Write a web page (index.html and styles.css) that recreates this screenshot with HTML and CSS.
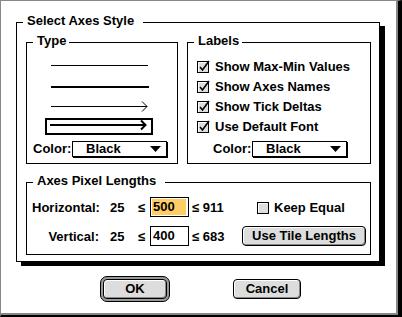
FILE: index.html
```html
<!DOCTYPE html>
<html lang="en">
<head>
    <meta charset="UTF-8">
    <title>Select Axes Style</title>
    <link rel="stylesheet" href="styles.css">
</head>
<body>
    <div class="dialog">
        <div class="group group-main">
            <span class="group-title wide">Select Axes Style</span>
            <div class="top-row">
                <div class="group group-type">
                    <span class="group-title">Type</span>
                    <div class="sample">
                        <svg width="108" height="20" shape-rendering="crispEdges"><rect x="6" y="10" width="97" height="1"/></svg>
                    </div>
                    <div class="sample">
                        <svg width="108" height="20" shape-rendering="crispEdges"><rect x="6" y="11" width="98" height="2"/></svg>
                    </div>
                    <div class="sample">
                        <svg width="108" height="20"><rect x="6" y="11" width="96" height="1" shape-rendering="crispEdges"/><polyline points="97,6.5 102,11.5 97,16.5" fill="none" stroke="#000"/></svg>
                    </div>
                    <div class="sample sample-boxed">
                        <svg width="108" height="17"><rect x="1" y="1" width="106" height="15" fill="none" stroke="#000" stroke-width="2" shape-rendering="crispEdges"/><rect x="5" y="6" width="94" height="2" shape-rendering="crispEdges"/><polyline points="96,2.5 100.5,7 96,11.5" fill="none" stroke="#000" stroke-width="2"/></svg>
                    </div>
                    <div class="color-row">
                        <span class="field-label">Color:</span>
                        <div class="popup">
                            <span>Black</span>
                            <svg class="popup-arrow" width="11" height="6"><polygon points="0,0 11,0 5.5,6"/></svg>
                        </div>
                    </div>
                </div>
                <div class="group group-labels">
                    <span class="group-title">Labels</span>
                    <div class="check-row">
                        <svg class="checkbox" width="13" height="13" viewBox="0 0 13 13"><rect x="0.5" y="1.5" width="11" height="11" fill="#ddd" stroke="#000"/><path d="M1.5 11.5V2.5H10.5" fill="none" stroke="#fff"/><path d="M3 7l2.5 3L12 1" fill="none" stroke="#000" stroke-width="1.6"/></svg>
                        <span>Show Max-Min Values</span>
                    </div>
                    <div class="check-row">
                        <svg class="checkbox" width="13" height="13" viewBox="0 0 13 13"><rect x="0.5" y="1.5" width="11" height="11" fill="#ddd" stroke="#000"/><path d="M1.5 11.5V2.5H10.5" fill="none" stroke="#fff"/><path d="M3 7l2.5 3L12 1" fill="none" stroke="#000" stroke-width="1.6"/></svg>
                        <span>Show Axes Names</span>
                    </div>
                    <div class="check-row">
                        <svg class="checkbox" width="13" height="13" viewBox="0 0 13 13"><rect x="0.5" y="1.5" width="11" height="11" fill="#ddd" stroke="#000"/><path d="M1.5 11.5V2.5H10.5" fill="none" stroke="#fff"/><path d="M3 7l2.5 3L12 1" fill="none" stroke="#000" stroke-width="1.6"/></svg>
                        <span>Show Tick Deltas</span>
                    </div>
                    <div class="check-row">
                        <svg class="checkbox" width="13" height="13" viewBox="0 0 13 13"><rect x="0.5" y="1.5" width="11" height="11" fill="#ddd" stroke="#000"/><path d="M1.5 11.5V2.5H10.5" fill="none" stroke="#fff"/><path d="M3 7l2.5 3L12 1" fill="none" stroke="#000" stroke-width="1.6"/></svg>
                        <span>Use Default Font</span>
                    </div>
                    <div class="color-row">
                        <span class="field-label">Color:</span>
                        <div class="popup">
                            <span>Black</span>
                            <svg class="popup-arrow" width="11" height="6"><polygon points="0,0 11,0 5.5,6"/></svg>
                        </div>
                    </div>
                </div>
            </div>
            <div class="group group-pixels">
                <span class="group-title wide">Axes Pixel Lengths</span>
                <div class="pixel-row">
                    <span class="axis-label">Horizontal:</span>
                    <span class="min">25</span>
                    <span class="le">≤</span>
                    <div class="edit"><span class="selected">500</span></div>
                    <span class="max">≤ 911</span>
                    <div class="keep">
                        <svg class="checkbox" width="13" height="13" viewBox="0 0 13 13"><rect x="0.5" y="1.5" width="11" height="11" fill="#ddd" stroke="#000"/><path d="M1.5 11.5V2.5H10.5" fill="none" stroke="#fff"/><path d="M2.5 12.5H11.5V2.5" fill="none" stroke="#999"/><rect x="0.5" y="1.5" width="11" height="11" fill="none" stroke="#000"/></svg>
                        <span>Keep Equal</span>
                    </div>
                </div>
                <div class="pixel-row">
                    <span class="axis-label">Vertical:</span>
                    <span class="min">25</span>
                    <span class="le">≤</span>
                    <div class="edit"><span>400</span></div>
                    <span class="max">≤ 683</span>
                    <button class="btn btn-tile">Use Tile Lengths</button>
                </div>
            </div>
        </div>
        <div class="buttons">
            <div class="default-ring"><button class="btn btn-ok">OK</button></div>
            <button class="btn btn-cancel">Cancel</button>
        </div>
    </div>
</body>
</html>
```

FILE: styles.css
```css
body {
    margin: 0;
    background-color: #fff;
    font-family: "Liberation Sans", Arial, sans-serif;
    font-size: 13px;
    font-weight: bold;
    color: #000;
}
.dialog {
    width: 402px;
    height: 317px;
    box-sizing: border-box;
    border-top: 1px solid #888;
    border-left: 1px solid #888;
    border-right: 4px solid #000;
    border-bottom: 2px solid #000;
    box-shadow: inset -2px -2px 0 #888;
    padding: 21px 0 0 15px;
}
.group {
    position: relative;
    border: 1px solid #000;
    background-color: #fff;
}
.group-title {
    position: absolute;
    top: -9px;
    left: 6px;
    padding: 0 3px 0 4px;
    line-height: 14px;
    background-color: #fff;
    white-space: nowrap;
}
.group-title.wide {
    padding-right: 9px;
}
.group-main {
    width: 364px;
    box-sizing: border-box;
    padding: 19px 8px 6px 9px;
    box-shadow: 5px 4px 0 #000;
}
.top-row {
    display: flex;
    gap: 9px;
}
.group-type {
    width: 152px;
    box-sizing: border-box;
    padding: 12px 0 6px;
    display: flex;
    flex-direction: column;
}
.group-labels {
    width: 184px;
    box-sizing: border-box;
    padding: 13px 0 6px;
    display: flex;
    flex-direction: column;
}
.sample {
    height: 20px;
    padding-left: 18px;
}
.sample svg {
    display: block;
}
.sample-boxed {
    height: 17px;
    margin-top: 3px;
}
.color-row {
    display: flex;
    align-items: center;
    margin-top: 6px;
    padding-left: 6px;
}
.group-labels .color-row {
    margin-top: 5px;
    padding-left: 25px;
}
.field-label {
    width: 39px;
    flex: none;
    line-height: 16px;
}
.popup {
    width: 95px;
    height: 16px;
    box-sizing: border-box;
    border: 1px solid #000;
    box-shadow: 1px 1px 0 #000;
    display: flex;
    align-items: center;
    justify-content: space-between;
    padding: 0 5px 0 13px;
    line-height: 14px;
}
.popup-arrow {
    display: block;
}
.check-row {
    height: 20px;
    display: flex;
    align-items: center;
    gap: 5px;
    padding-left: 9px;
}
.checkbox {
    display: block;
    flex: none;
}
.group-pixels {
    margin-top: 18px;
    padding: 14px 0 8px 5px;
}
.pixel-row {
    display: flex;
    align-items: center;
    height: 20px;
}
.pixel-row + .pixel-row {
    margin-top: 9px;
}
.axis-label {
    width: 67px;
    text-align: right;
}
.min {
    width: 28px;
    margin-left: 11px;
}
.le {
    width: 12px;
}
.edit {
    width: 39px;
    height: 20px;
    box-sizing: border-box;
    border: 1px solid #000;
    padding: 1px 2px 2px 1px;
}
.edit span {
    display: block;
    height: 16px;
    line-height: 16px;
    padding-left: 1px;
}
.edit .selected {
    background-color: #ffcc66;
}
.max {
    width: 50px;
    margin-left: 3px;
}
.keep {
    display: flex;
    align-items: center;
    gap: 4px;
    margin-left: 15px;
}
.btn {
    font: inherit;
    color: #000;
    height: 20px;
    padding: 0;
    line-height: 16px;
    border: 1px solid #000;
    border-radius: 4px;
    background-color: #ddd;
    box-shadow: inset 1px 1px 0 #fff, inset -1px -1px 0 #888;
}
.btn-tile {
    width: 124px;
}
.buttons {
    display: flex;
    align-items: center;
    gap: 63px;
    margin: 14px 0 0 84px;
}
.default-ring {
    display: flex;
    padding: 2px;
    border: 1px solid #000;
    border-radius: 7px;
    background-color: #999;
}
.btn-ok {
    width: 64px;
}
.btn-cancel {
    width: 68px;
}
```
